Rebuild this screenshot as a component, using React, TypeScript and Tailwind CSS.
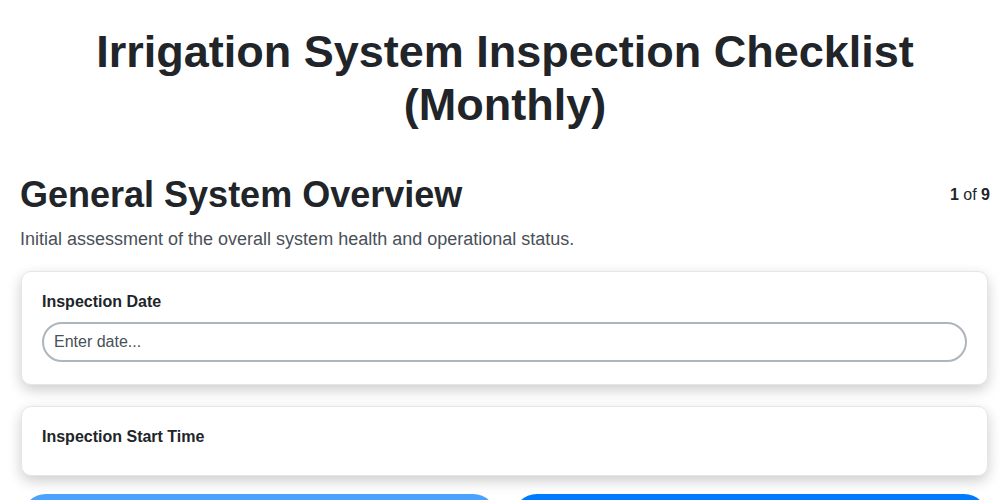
import React from 'react';

const cardCls =
  'bg-white border border-[#e4e6ee] rounded-[10px] shadow-[0_5px_14px_rgba(0,0,0,0.2)] px-5 pt-5';

export default function App() {
  return (
    <div className="min-h-screen bg-white text-[#212529] font-['Liberation_Sans',Arial,sans-serif]">
      <div className="pl-5 pr-[10px] pt-[25px]">
        <h1 className="text-center text-[45px] leading-[53px] font-bold px-10">
          Irrigation System Inspection Checklist (Monthly)
        </h1>

        <div className="mt-[42px] flex items-start justify-between">
          <h2 className="text-[36px] leading-[1.2] font-bold">General System Overview</h2>
          <div className="text-base mt-[10px]">
            <span className="font-bold">1</span> of <span className="font-bold">9</span>
          </div>
        </div>
        <p className="mt-[13px] text-lg leading-[1.2] text-[#495057]">
          Initial assessment of the overall system health and operational status.
        </p>

        <div className="mt-5 ml-px mr-[2px] flex flex-col gap-[21px]">
          <div className={`${cardCls} pb-[22px]`}>
            <label className="block text-base leading-[1.2] font-bold text-[#212529] mb-[11px]">Inspection Date</label>
            <input
              type="text"
              placeholder="Enter date..."
              className="w-full h-10 rounded-full border-2 border-[#adb5bd] bg-white px-2.5 text-base text-[#495057] placeholder:text-[#495057] outline-none"
            />
          </div>
          <div className={`${cardCls} pb-[29px]`}>
            <label className="block text-base leading-[1.2] font-bold text-[#212529]">Inspection Start Time</label>
          </div>
        </div>

        <div className="mt-[18px] ml-[2px] mr-[2px] grid grid-cols-2 gap-4 pb-6">
          <button disabled className="h-12 rounded-3xl bg-[#007bff] opacity-70 text-white text-base font-bold">
            Previous
          </button>
          <button className="h-12 rounded-3xl bg-[#007bff] text-white text-base font-bold">
            Next
          </button>
        </div>
      </div>
    </div>
  );
}
